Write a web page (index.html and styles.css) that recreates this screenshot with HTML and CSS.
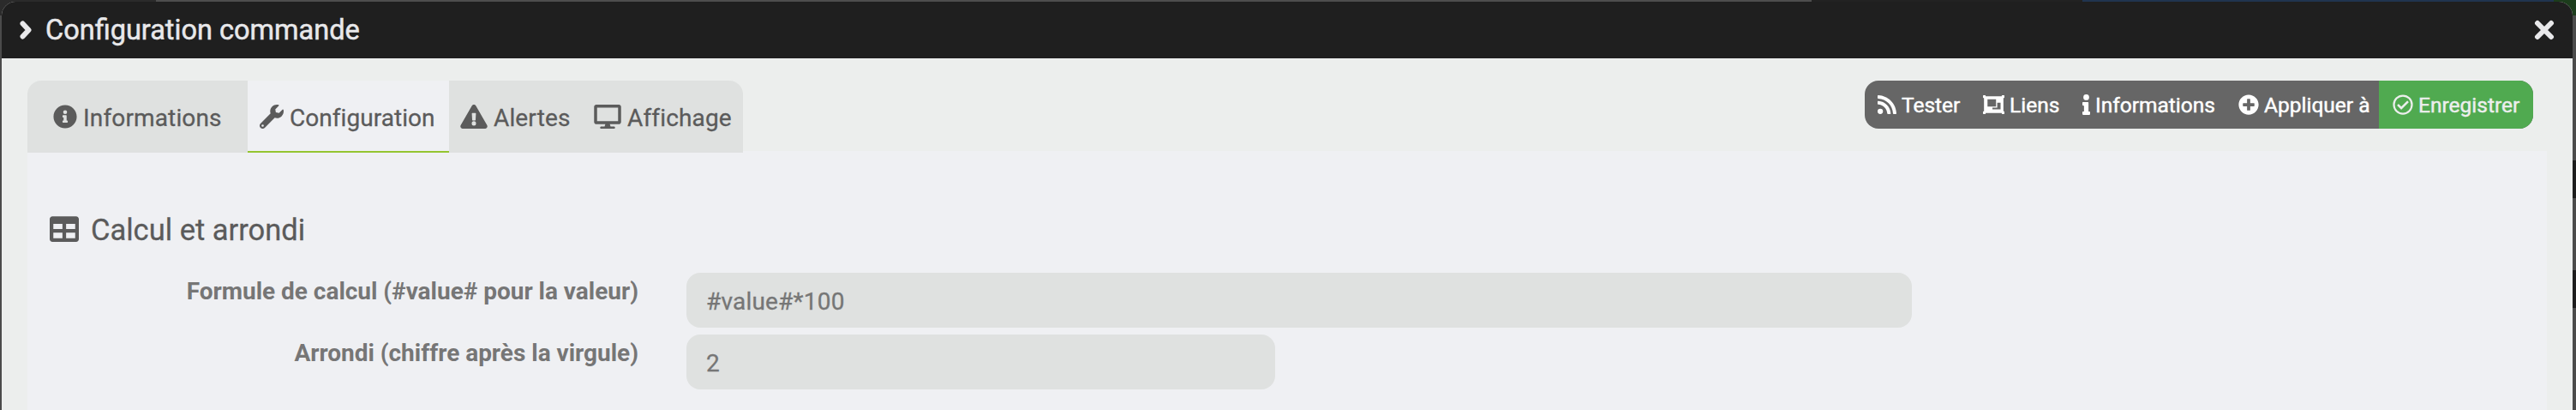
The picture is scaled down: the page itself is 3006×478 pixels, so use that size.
FILE: index.html
```html
<!DOCTYPE html>
<html lang="fr">
<head>
<meta charset="utf-8">
<title>Configuration commande</title>
<link rel="stylesheet" href="styles.css">
</head>
<body>
<div class="modal">
  <header class="titlebar">
    <svg class="chevron" viewBox="0 0 14 22"><path d="M3.5 3.5L10.500 11L3.500 18.500"/></svg>
    <h1 class="title">Configuration commande</h1>
    <svg class="close" viewBox="0 0 24 24"><path d="M4 4L20 20M20 4L4 20"/></svg>
  </header>
  <main class="content">
    <div class="toolbar">
      <nav class="tabs">
        <a class="tab tab-info"><svg class="ico28" viewBox="0 0 512 512"><path d="M256 8C119 8 8 119 8 256s111 248 248 248 248-111 248-248S393 8 256 8zm0 110a42 42 0 1 1 0 84 42 42 0 0 1 0-84zm56 254c0 7-5 12-12 12h-88c-7 0-12-5-12-12v-24c0-7 5-12 12-12h12v-64h-12c-7 0-12-5-12-12v-24c0-7 5-12 12-12h64c7 0 12 5 12 12v100h12c7 0 12 5 12 12z"/></svg><span>Informations</span></a>
        <a class="tab tab-config active"><svg class="ico28" viewBox="0 0 512 512"><path d="M507.700 109.100c-2.200-9-13.500-12.100-20.100-5.500l-74.400 74.400-67.900-11.300-11.300-67.900 74.400-74.400c6.600-6.600 3.400-17.900-5.700-20.200-47.400-11.700-99.600.9-136.600 37.900-39.600 39.600-50.500 97.100-34.100 147.200L18.700 402.800c-25 25-25 65.500 0 90.500s65.500 25 90.500 0l213.200-213.200c50.100 16.700 107.500 5.700 147.400-34.200 37-37 49.600-89.300 37.900-136.800zM64 472a24 24 0 1 1 0-48 24 24 0 0 1 0 48z"/></svg><span>Configuration</span></a>
        <a class="tab tab-alert"><svg class="ico32" viewBox="0 0 576 512"><path d="M569.500 440c18.500 32-4.700 72-41.600 72H48c-36.900 0-60-40-41.600-72L246.400 24c18.500-32 64.700-32 83.200 0zM288 354a46 46 0 1 0 0 92 46 46 0 0 0 0-92zm-43.700-165.300l7.400 136c.3 6.400 5.600 11.300 12 11.300h48.500c6.400 0 11.700-5 12-11.300l7.400-136c.4-6.900-5-12.700-12-12.700h-63.400c-6.900 0-12.300 5.800-11.900 12.700z"/></svg><span>Alertes</span></a>
        <a class="tab tab-display"><svg class="ico32" viewBox="0 0 576 512"><path d="M528 0H48C21.500 0 0 21.500 0 48v320c0 26.500 21.500 48 48 48h192l-16 48h-72c-13 0-24 11-24 24s11 24 24 24h272c13 0 24-11 24-24s-11-24-24-24h-72l-16-48h192c26.500 0 48-21.500 48-48V48c0-26.500-21.500-48-48-48zm-16 352H64V64h448z"/></svg><span>Affichage</span></a>
      </nav>
      <div class="actions">
        <a class="btn btn-test"><svg class="ico-rss" viewBox="0 0 448 448"><path d="M64 320a64 64 0 1 1 0 128 64 64 0 0 1 0-128zM0 152v50c0 8 6 15 14 16 116 8 209 101 216 216 1 8 8 14 16 14h50c9 0 17-8 16-17C303 268 176 144 17 136c-9-1-17 7-17 16zM0 16v50c0 9 7 16 15 16 196 8 343 165 351 351 0 8 7 15 16 15h50c9 0 16-8 16-17C440 199 248 9 17 0 8 0 0 7 0 16z"/></svg><span>Tester</span></a>
        <a class="btn btn-links"><svg class="ico-group" viewBox="0 0 512 448"><path fill-rule="evenodd" d="M0 12Q0 0 12 0H52Q64 0 64 12V24H448V12Q448 0 460 0H500Q512 0 512 12V52Q512 64 500 64H488V384H500Q512 384 512 396V436Q512 448 500 448H460Q448 448 448 436V424H64V436Q64 448 52 448H12Q0 448 0 436V396Q0 384 12 384H24V64H12Q0 64 0 52ZM108 96H312V268H108ZM340 180H420V336H226V296H340Z"/></svg><span>Liens</span></a>
        <a class="btn btn-information"><svg class="ico-i" viewBox="0 0 192 512"><path d="M20 424h20V280H20c-11 0-20-9-20-20v-48c0-11 9-20 20-20h112c11 0 20 9 20 20v212h20c11 0 20 9 20 20v48c0 11-9 20-20 20H20c-11 0-20-9-20-20v-48c0-11 9-20 20-20zM96 0a72 72 0 1 1 0 144A72 72 0 0 1 96 0z"/></svg><span>Informations</span></a>
        <a class="btn btn-apply"><svg class="ico24" viewBox="0 0 512 512"><path d="M256 8C119 8 8 119 8 256s111 248 248 248 248-111 248-248S393 8 256 8zm144 276c0 7-5 12-12 12h-92v92c0 7-5 12-12 12h-56c-7 0-12-5-12-12v-92h-92c-7 0-12-5-12-12v-56c0-7 5-12 12-12h92v-92c0-7 5-12 12-12h56c7 0 12 5 12 12v92h92c7 0 12 5 12 12z"/></svg><span>Appliquer à</span></a>
        <a class="btn btn-save"><svg class="ico24" viewBox="0 0 512 512"><path d="M256 8a248 248 0 1 0 0 496 248 248 0 0 0 0-496zm0 48a200 200 0 1 1 0 400 200 200 0 0 1 0-400zm140 130l-22-23c-5-5-12-5-17 0L216 303l-60-60c-5-5-12-5-17 0l-23 22c-4 5-4 13 0 17l91 92c5 5 13 5 17 0l172-171c5-4 5-12 0-17z"/></svg><span>Enregistrer</span></a>
      </div>
    </div>
    <section class="panel">
      <h2 class="legend"><svg class="ico-table" viewBox="0 0 512 448"><path fill-rule="evenodd" d="M464 0H48C21 0 0 21 0 48v352c0 27 21 48 48 48h416c27 0 48-21 48-48V48c0-27-21-48-48-48zM64 132H224V224H64ZM288 132H448V224H288ZM64 288H224V384H64ZM288 288H448V384H288Z"/></svg><span>Calcul et arrondi</span></h2>
      <div class="row"><label class="label">Formule de calcul (#value# pour la valeur)</label><div class="field field-wide">#value#*100</div></div>
      <div class="row"><label class="label">Arrondi (chiffre après la virgule)</label><div class="field field-half">2</div></div>
    </section>
  </main>
</div>
</body>
</html>
```
FILE: styles.css
```css
* { box-sizing: border-box; }
body {
  margin: 0;
  height: 478px;
  padding: 2px 4px 0 2px;
  overflow: hidden;
  background:
    linear-gradient(90deg, #2b2b2b 0 182px, #4d4d4d 182px 2114px, #222 2114px 2430px, #20344f 2430px 2980px, #1c3c1c 2980px) top / 100% 18px no-repeat,
    linear-gradient(#1d1d1d, #1d1d1d) 100% 187px / 4px 44px no-repeat,
    linear-gradient(#1d1d1d, #1d1d1d) 100% 315px / 4px 44px no-repeat,
    #4b4b4b;
  font-family: Roboto, "Liberation Sans", sans-serif;
}
svg { display: block; flex: none; fill: currentColor; }
.modal { height: 476px; border-radius: 16px 16px 0 0; overflow: hidden; background: #eceeed; }
.titlebar { display: flex; align-items: center; height: 66px; padding: 0 21px 0 21px; background: #1f1f1f; color: #e8e8ea; }
.chevron { width: 14px; height: 22px; margin-right: 16px; }
.chevron path, .close path { fill: none; stroke: currentColor; stroke-width: 6; stroke-linecap: round; stroke-linejoin: round; }
.title { margin: 0 auto 0 0; padding-top: 1px; font-size: 32.5px; font-weight: 400; line-height: 65px; white-space: nowrap; -webkit-text-stroke: 0.5px currentColor; }
.close { width: 24px; height: 24px; }
.content { padding: 26px 30px 0; }
.toolbar { display: flex; justify-content: space-between; height: 82px; }
.tabs { display: flex; position: relative; height: 84px; width: 835px; border-radius: 16px 16px 0 0; overflow: hidden; background: #dfe1e0; color: #5b5b5b; font-size: 28px; letter-spacing: 0.15px; }
.tab { display: flex; align-items: center; gap: 7px; height: 84px; white-space: nowrap; -webkit-text-stroke: 0.3px currentColor; }
.tab span { padding-top: 2px; }
.tab-info { width: 257px; padding-left: 30px; }
.tab-config { width: 235px; padding-left: 14px; letter-spacing: 0.05px; }
.tab-alert { width: 155px; padding-left: 13px; }
.tab-display { padding-left: 14px; }
.active { background: #eff0f3; box-shadow: inset 0 -2px #94c530; }
.ico28 { width: 28px; height: 28px; }
.ico32 { width: 32px; height: 28px; }
.actions { display: flex; height: 56px; width: 780px; margin-right: 16px; border-radius: 16px; overflow: hidden; background: #666; color: #fff; font-size: 24.5px; -webkit-text-stroke: 0.45px currentColor; }
.btn { display: flex; align-items: center; gap: 6px; height: 56px; white-space: nowrap; }
.btn span { padding-top: 1px; }
.btn-test { width: 122px; padding-left: 15px; }
.btn-links { width: 118px; padding-left: 16px; }
.btn-information { width: 180px; padding-left: 14px; }
.btn-apply { width: 180px; padding-left: 16px; }
.btn-save { width: 180px; padding-left: 16px; background: #50aa50; color: #eceeed; }
.ico-rss { width: 22px; height: 22px; }
.ico-group { width: 25px; height: 22px; }
.ico-i { width: 9px; height: 24px; }
.ico24 { width: 24px; height: 24px; }
.panel { height: 302px; padding: 64px 26px 0; background: #eff0f3; }
.legend { display: flex; align-items: center; gap: 14px; height: 54px; margin: 0 0 24px; color: #5b5b5b; font-size: 34.5px; font-weight: 400; -webkit-text-stroke: 0.3px currentColor; }
.legend span { padding-top: 2px; }
.ico-table { width: 34px; height: 30px; }
.row { display: flex; height: 64px; margin-bottom: 8px; }
.label { width: 687px; margin-right: 56px; padding-top: 5px; color: #767676; font-size: 28px; font-weight: 700; line-height: 33px; letter-spacing: -0.02px; text-align: right; white-space: nowrap; }
.field { height: 64px; padding-left: 23px; border-radius: 16px; background: #dfe1e0; color: #767676; font-size: 28px; line-height: 67px; letter-spacing: 0.2px; -webkit-text-stroke: 0.3px currentColor; }
.field-wide { width: 1430px; }
.field-half { width: 687px; }
```
